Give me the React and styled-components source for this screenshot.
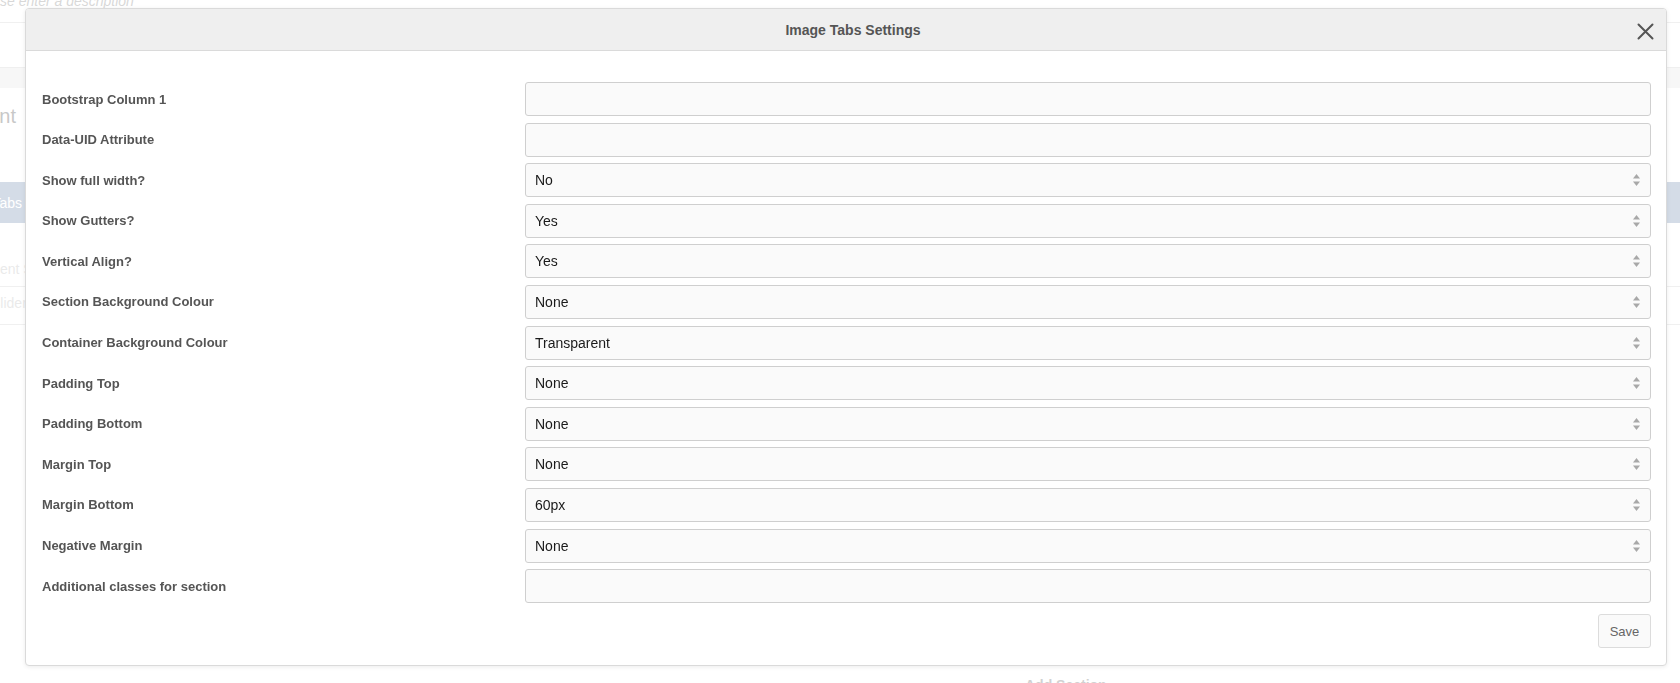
import React from 'react'
import styled, { createGlobalStyle } from 'styled-components'

const GlobalStyle = createGlobalStyle`
  * { box-sizing: border-box; }
  html, body {
    margin: 0;
    padding: 0;
    background: #fff;
  }
  body {
    font-family: "Liberation Sans", Arial, sans-serif;
    overflow: hidden;
  }
`

/* page behind the modal */
const BackPage = styled.div`
  height: 100vh;
  overflow: hidden;
  display: flex;
  flex-direction: column;
`
const DescRow = styled.div`
  height: 23px;
  border-bottom: 1px solid #dedede;
  overflow: hidden;
`
const Peek = styled.div`
  width: 25px;
  overflow: hidden;
  display: flex;
  justify-content: ${p => (p.$start ? 'flex-start' : 'flex-end')};
  white-space: nowrap;
`
const Shifted = styled.span`
  margin-left: ${p => p.$by}px;
`
const DescText = styled.p`
  margin: -7px 0 0 -28px;
  font-size: 14px;
  font-style: italic;
  color: #a9a9a9;
  white-space: nowrap;
`
const GreyBand = styled.div`
  height: 21px;
  margin-top: 44px;
  background: #eeeeee;
  border-top: 1px solid #dcdcdc;
`
const PageTitle = styled.h2`
  margin: 17px 9px 0 0;
  font-size: 20px;
  font-weight: normal;
  color: #858585;
`
const TabBar = styled.div`
  height: 41px;
  margin-top: 54px;
  background: #a0b2ca;
  display: flex;
  align-items: center;
`
const TabLabel = styled.span`
  margin-right: 3px;
  font-size: 14px;
  color: #fff;
`
const List = styled.div`
  display: flex;
  flex-direction: column;
`
const ListItem = styled.div`
  height: ${p => p.$h}px;
  padding-top: ${p => p.$pt}px;
  border-bottom: 1px solid #dedede;
  font-size: 14px;
  color: #d0d0d0;
`
const FootAction = styled.div`
  margin-top: auto;
  margin-left: 1025px;
  margin-bottom: -10px;
  font-size: 14px;
  font-weight: bold;
  color: #999;
`

const Backdrop = styled.div`
  position: fixed;
  inset: 0;
  background: rgba(255, 255, 255, 0.55);
`

/* modal */
const Modal = styled.div`
  position: fixed;
  top: 8px;
  left: 25px;
  right: 13px;
  background: #fff;
  border: 1px solid #dadada;
  border-radius: 4px;
  box-shadow: 0 1px 4px rgba(0, 0, 0, 0.08);
  overflow: hidden;
`
const Header = styled.div`
  height: 42px;
  background: #efefef;
  border-bottom: 1px solid #dadada;
  display: grid;
  grid-template-columns: 1fr auto 1fr;
  align-items: center;
`
const Title = styled.h4`
  grid-column: 2;
  margin: 0;
  padding-left: 14px;
  font-size: 14px;
  font-weight: bold;
  color: #555;
`
const CloseButton = styled.button`
  grid-column: 3;
  justify-self: end;
  margin-right: 12px;
  margin-top: 3px;
  padding: 0;
  border: 0;
  background: none;
  display: flex;
  cursor: pointer;
`
const Body = styled.div`
  padding: 31px 15px 17px 16px;
`
const Form = styled.div`
  display: grid;
  grid-template-columns: 483px 1fr;
  row-gap: 6.6px;
  align-items: center;
`
const Label = styled.label`
  font-size: 13px;
  font-weight: bold;
  color: #555;
`
const fieldCss = `
  width: 100%;
  height: 34px;
  margin: 0;
  padding: 0 9px;
  background: #fafafa;
  border: 1px solid #cfcfcf;
  border-radius: 3px;
  font-family: "Liberation Sans", Arial, sans-serif;
  font-size: 14px;
  color: #1a1a1a;
  outline: none;
`
const TextInput = styled.input`
  ${fieldCss}
`
const SelectWrap = styled.div`
  position: relative;
`
const Select = styled.select`
  ${fieldCss}
  appearance: none;
  -webkit-appearance: none;
`
const Arrows = styled.svg`
  position: absolute;
  right: 11px;
  top: 11px;
  pointer-events: none;
`
const Footer = styled.div`
  display: flex;
  justify-content: flex-end;
  margin-top: 11px;
`
const SaveButton = styled.button`
  height: 34px;
  width: 53px;
  padding: 0;
  background: #fafafa;
  border: 1px solid #dcdcdc;
  border-radius: 3px;
  font-family: "Liberation Sans", Arial, sans-serif;
  font-size: 13px;
  color: #666;
`

const fields = [
  { label: 'Bootstrap Column 1' },
  { label: 'Data-UID Attribute' },
  { label: 'Show full width?', value: 'No', options: ['No', 'Yes'] },
  { label: 'Show Gutters?', value: 'Yes', options: ['No', 'Yes'] },
  { label: 'Vertical Align?', value: 'Yes', options: ['No', 'Yes'] },
  { label: 'Section Background Colour', value: 'None', options: ['None', 'Light', 'Dark'] },
  { label: 'Container Background Colour', value: 'Transparent', options: ['Transparent', 'White'] },
  { label: 'Padding Top', value: 'None', options: ['None', '30px', '60px'] },
  { label: 'Padding Bottom', value: 'None', options: ['None', '30px', '60px'] },
  { label: 'Margin Top', value: 'None', options: ['None', '30px', '60px'] },
  { label: 'Margin Bottom', value: '60px', options: ['None', '30px', '60px'] },
  { label: 'Negative Margin', value: 'None', options: ['None', 'Top', 'Bottom'] },
  { label: 'Additional classes for section' },
]

const Field = ({ field, id }) => {
  if (!field.options) return <TextInput id={id} type="text" />
  return (
    <SelectWrap>
      <Select id={id} defaultValue={field.value}>
        {field.options.map(o => <option key={o}>{o}</option>)}
      </Select>
      <Arrows width="7" height="12" viewBox="0 0 7 12">
        <polygon points="3.5,0 7,4.5 0,4.5" fill="#a8a8a8" />
        <polygon points="0,7.5 7,7.5 3.5,12" fill="#a8a8a8" />
      </Arrows>
    </SelectWrap>
  )
}

const App = () => {
  return (
    <>
      <GlobalStyle />
      <BackPage>
        <DescRow>
          <DescText>Please enter a description</DescText>
        </DescRow>
        <GreyBand />
        <Peek>
          <PageTitle>Content</PageTitle>
        </Peek>
        <TabBar>
          <Peek>
            <TabLabel>Image Tabs</TabLabel>
          </Peek>
        </TabBar>
        <List>
          <ListItem $h={64} $pt={38}>
            <Peek $start>
              <Shifted $by={-53}>Component Settings</Shifted>
            </Peek>
          </ListItem>
          <ListItem $h={38} $pt={8}>
            <Peek $start>
              <Shifted $by={-9}>Slider</Shifted>
            </Peek>
          </ListItem>
        </List>
        <FootAction>Add Section</FootAction>
      </BackPage>
      <Backdrop />
      <Modal>
        <Header>
          <Title>Image Tabs Settings</Title>
          <CloseButton aria-label="Close">
            <svg width="17" height="17" viewBox="0 0 17 17">
              <path d="M1.5 1.5 L15.5 15.5 M15.5 1.5 L1.5 15.5" stroke="#555" strokeWidth="2" strokeLinecap="round" />
            </svg>
          </CloseButton>
        </Header>
        <Body>
          <Form>
            {fields.map((f, i) => (
              <React.Fragment key={f.label}>
                <Label htmlFor={'f' + i}>{f.label}</Label>
                <Field field={f} id={'f' + i} />
              </React.Fragment>
            ))}
          </Form>
          <Footer>
            <SaveButton>Save</SaveButton>
          </Footer>
        </Body>
      </Modal>
    </>
  )
}

export default App
